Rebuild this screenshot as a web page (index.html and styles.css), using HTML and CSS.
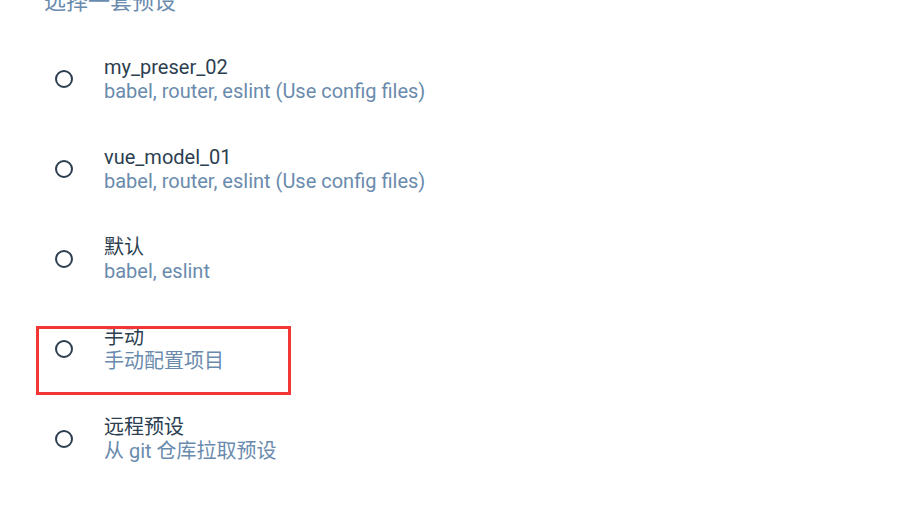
FILE: index.html
```html
<!DOCTYPE html>
<html lang="zh">
<head>
<meta charset="utf-8">
<link rel="stylesheet" href="styles.css">
</head>
<body>
<div class="page">
  <h2 class="heading">选择一套预设</h2>
  <ul class="preset-list">
    <li class="preset">
      <span class="radio"></span>
      <div class="info">
        <div class="name">my_preser_02</div>
        <div class="desc">babel, router, eslint (Use config files)</div>
      </div>
    </li>
    <li class="preset">
      <span class="radio"></span>
      <div class="info">
        <div class="name">vue_model_01</div>
        <div class="desc">babel, router, eslint (Use config files)</div>
      </div>
    </li>
    <li class="preset">
      <span class="radio"></span>
      <div class="info">
        <div class="name">默认</div>
        <div class="desc">babel, eslint</div>
      </div>
    </li>
    <li class="preset">
      <span class="radio"></span>
      <div class="info">
        <div class="name">手动</div>
        <div class="desc">手动配置项目</div>
      </div>
      <span class="mark"></span>
    </li>
    <li class="preset">
      <span class="radio"></span>
      <div class="info">
        <div class="name">远程预设</div>
        <div class="desc">从 git 仓库拉取预设</div>
      </div>
    </li>
  </ul>
</div>
</body>
</html>
```

FILE: styles.css
```css
html, body {
  margin: 0;
  padding: 0;
  background: #ffffff;
  overflow: hidden;
}
body {
  font-family: Roboto, "Noto Sans CJK SC", sans-serif;
  color: #2c3e50;
}
.page {
  width: 899px;
  height: 517px;
  overflow: hidden;
}
.heading {
  margin: -13px 0 0 44px;
  font-size: 22px;
  line-height: 30px;
  font-weight: 400;
  color: #6a8bad;
}
.preset-list {
  list-style: none;
  margin: 17px 0 0 0;
  padding: 0;
}
.preset {
  position: relative;
  display: flex;
  align-items: center;
  height: 90px;
  padding-left: 55px;
}
.radio {
  flex: none;
  width: 14px;
  height: 14px;
  border: 2px solid #2c3e50;
  border-radius: 50%;
  margin-right: 31px;
}
.info {
  display: flex;
  flex-direction: column;
}
.name {
  font-size: 20px;
  line-height: 24px;
  color: #2c3e50;
}
.desc {
  font-size: 20px;
  line-height: 24px;
  color: #6a8bad;
}
.mark {
  position: absolute;
  left: 36px;
  top: 22px;
  width: 249px;
  height: 63px;
  border: 3px solid #f23535;
}
```
